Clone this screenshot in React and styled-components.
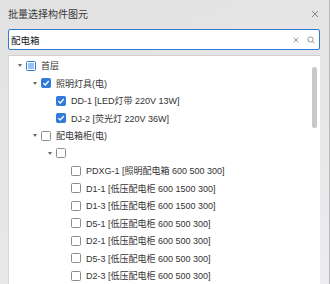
import React from 'react'
import styled, { createGlobalStyle } from 'styled-components';

const tree = [
  {
    label: "首层", state: "partial", open: true, children: [
      {
        label: "照明灯具(电)", state: "checked", open: true, children: [
          { label: "DD-1 [LED灯带 220V 13W]", state: "checked" },
          { label: "DJ-2 [荧光灯 220V 36W]", state: "checked" },
        ]
      },
      {
        label: "配电箱柜(电)", state: "none", open: true, children: [
          {
            label: "", state: "none", open: true, children: [
              { label: "PDXG-1 [照明配电箱 600 500 300]", state: "none" },
              { label: "D1-1 [低压配电柜 600 1500 300]", state: "none" },
              { label: "D1-3 [低压配电柜 600 1500 300]", state: "none" },
              { label: "D5-1 [低压配电柜 600 500 300]", state: "none" },
              { label: "D2-1 [低压配电柜 600 500 300]", state: "none" },
              { label: "D5-3 [低压配电柜 600 500 300]", state: "none" },
              { label: "D2-3 [低压配电柜 600 500 300]", state: "none" },
            ]
          }
        ]
      }
    ]
  }
];

function flatten(nodes, level = 0, out = []) {
  nodes.forEach(node => {
    out.push({ ...node, level });
    if (node.children && node.open) flatten(node.children, level + 1, out);
  });
  return out;
}

function CheckBox({ state }) {
  return (
    <Box $state={state}>
      {state === "checked" && (
        <svg width="8" height="8" viewBox="0 0 8 8">
          <path d="M1.3 4.1 L3.2 6 L6.8 2" fill="none" stroke="#fff" strokeWidth="1.3" />
        </svg>
      )}
      {state === "partial" && <Inner />}
    </Box>
  );
}

export default function App() {
  const rows = flatten(tree);
  return (
    <>
      <GlobalStyle />
      <Dialog>
        <TitleBar>
          <Title>批量选择构件图元</Title>
          <CloseIcon viewBox="0 0 8 8">
            <path d="M1 1 L7 7 M7 1 L1 7" stroke="#7a7a7a" strokeWidth="0.9" />
          </CloseIcon>
        </TitleBar>
        <SearchBox>
          <SearchText>配电箱</SearchText>
          <SmallIcon viewBox="0 0 8 8">
            <path d="M1.5 1.5 L6.5 6.5 M6.5 1.5 L1.5 6.5" stroke="#8a8a8a" strokeWidth="0.9" />
          </SmallIcon>
          <SmallIcon viewBox="0 0 8 8">
            <circle cx="3.5" cy="3.5" r="2.6" fill="none" stroke="#8a8a8a" strokeWidth="0.9" />
            <path d="M5.4 5.4 L7.4 7.4" stroke="#8a8a8a" strokeWidth="1" />
          </SmallIcon>
        </SearchBox>
        <TreePanel>
          {rows.map((row, i) => (
            <Row key={i} style={{ paddingLeft: 9 + row.level * 15 }}>
              <Toggle>{row.children && <Arrow />}</Toggle>
              <CheckBox state={row.state} />
              <Label>{row.label}</Label>
            </Row>
          ))}
          <Thumb />
        </TreePanel>
      </Dialog>
    </>
  );
}

const GlobalStyle = createGlobalStyle`
  html, body {
    margin: 0;
    padding: 0;
    overflow: hidden;
  }
  body {
    font-family: "Noto Sans CJK SC", "Liberation Sans", sans-serif;
  }
`;

const Dialog = styled.div`
  width: 330px;
  height: 284px;
  box-sizing: border-box;
  display: flex;
  flex-direction: column;
  padding: 0 9px 0 8px;
  background: linear-gradient(160deg, #e2e2e2 0%, #e7e7e9 60%, #ececf1 100%);
  border-right: 1px solid #b9b9b9;
  overflow: hidden;
`;

const TitleBar = styled.div`
  height: 29px;
  display: flex;
  align-items: center;
  justify-content: space-between;
  padding-right: 1px;
`;

const Title = styled.div`
  font-size: 10px;
  color: #3a3a3a;
  margin-top: -2px;
`;

const CloseIcon = styled.svg`
  width: 8px;
  height: 8px;
  margin-top: -2px;
`;

const SearchBox = styled.div`
  height: 21px;
  box-sizing: border-box;
  display: flex;
  align-items: center;
  gap: 7px;
  padding: 0 4px 0 2px;
  background: #fff;
  border: 1px solid #2f7bd6;
  border-radius: 2px;
`;

const SearchText = styled.div`
  flex: 1;
  font-size: 9.5px;
  color: #222;
`;

const SmallIcon = styled.svg`
  width: 8px;
  height: 8px;
`;

const TreePanel = styled.div`
  position: relative;
  flex: 1;
  margin-top: 5px;
  padding-top: 1px;
  background: #fff;
  border-top: 1px solid #cfcfcf;
  border-left: 1px solid #d8d8d8;
  overflow: hidden;
`;

const Row = styled.div`
  height: 17.5px;
  display: flex;
  align-items: center;
  white-space: nowrap;
`;

const Toggle = styled.div`
  width: 8px;
  height: 8px;
  display: flex;
  align-items: center;
`;

const Arrow = styled.div`
  width: 0;
  height: 0;
  border-left: 2.5px solid transparent;
  border-right: 2.5px solid transparent;
  border-top: 3px solid #6a6a6a;
`;

const Box = styled.div`
  width: 10px;
  height: 10px;
  box-sizing: border-box;
  border-radius: 1.5px;
  display: flex;
  align-items: center;
  justify-content: center;
  background: ${p => (p.$state === "checked" ? "#2f7bd6" : "#fff")};
  border: 1px solid ${p => (p.$state === "none" ? "#8c8c8c" : "#2f7bd6")};
`;

const Inner = styled.div`
  width: 6px;
  height: 6px;
  background: #9cc3ef;
`;

const Label = styled.span`
  margin-left: 5px;
  font-family: "Liberation Sans", "Noto Sans CJK SC", sans-serif;
  font-size: 9px;
  color: #333;
`;

const Thumb = styled.div`
  position: absolute;
  top: 11px;
  right: 3px;
  width: 5px;
  height: 61px;
  border-radius: 3px;
  background: #c8c8c8;
`;
